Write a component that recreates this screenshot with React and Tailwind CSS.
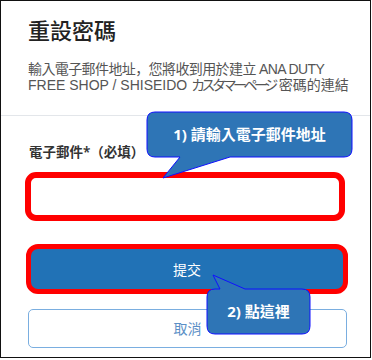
export default function App() {
  return (
    <div
      className="relative w-[372px] h-[360px] bg-white"
      style={{ fontFamily: '"Noto Sans", "Noto Sans CJK TC", sans-serif' }}
    >
      <div className="w-[371px] h-[358px] border-[1.5px] border-[#111] flex flex-col">
        <div className="px-[27px] pt-[14px] h-[114px]">
          <h1 className="text-[22px] leading-[30px] text-[#222] font-medium">重設密碼</h1>
          <div className="mt-[15px] text-[14px] leading-[16px] text-[#555] whitespace-nowrap font-['Liberation_Sans','Noto_Sans_CJK_TC',sans-serif]">
            <div className="tracking-[-0.6px]">
              輸入電子郵件地址
              <span className="font-['Noto_Sans_CJK_JP']">，</span>
              您將收到用於建立 ANA DUTY
            </div>
            <div>
              FREE SHOP / SHISEIDO{" "}
              <span className="tracking-[-3.5px]">カスタマーページ</span>
              <span className="ml-[4px]">密碼的連結</span>
            </div>
          </div>
        </div>
        <div className="h-px bg-[#e3e6ea]"></div>
        <div className="px-[24px] pt-[28px] flex flex-col">
          <label className="pl-[4px] text-[13.5px] leading-[16px] font-semibold text-[#333] whitespace-nowrap">
            電子郵件*（必填）
          </label>
          <div className="mt-[12px] h-[49px] w-[320px] border-[6px] border-[#ff0000] rounded-[11px] bg-white"></div>
          <div className="mt-[23px] h-[50px] w-[322px] ml-[1px] border-[5px] border-[#ff0000] rounded-[12px] bg-[#2172b6] flex items-center justify-center">
            <span className="text-white text-[14px]">提交</span>
          </div>
          <div className="mt-[15px] ml-[3px] h-[39px] w-[319px] border-[1.5px] border-[#7aaee0] rounded-[5px] flex items-center justify-center">
            <span className="text-[#5b8fc6] text-[14px]">取消</span>
          </div>
        </div>
      </div>

      <svg
        className="absolute left-0 top-0 pointer-events-none"
        width="372"
        height="360"
        viewBox="0 0 372 360"
      >
        <path
          d="M155,112 H344 Q352,112 352,120 V149 Q352,157 344,157 H230 L163,178 L180,157 H155 Q147,157 147,149 V120 Q147,112 155,112 Z"
          fill="#2e75b6"
          stroke="#1010ff"
          strokeWidth="1"
        />
        <path
          d="M215,289 H220 L213,275 L245,289 H302 Q310,289 310,297 V326 Q310,334 302,334 H215 Q207,334 207,326 V297 Q207,289 215,289 Z"
          fill="#2e75b6"
          stroke="#1010ff"
          strokeWidth="1"
        />
      </svg>
      <div className="absolute left-[147px] top-[112px] w-[205px] h-[45px] flex items-center justify-center text-white font-bold text-[15px]">
        1) 請輸入電子郵件地址
      </div>
      <div className="absolute left-[207px] top-[289px] w-[103px] h-[45px] flex items-center justify-center text-white font-bold text-[15px]">
        2) 點這裡
      </div>
    </div>
  );
}
